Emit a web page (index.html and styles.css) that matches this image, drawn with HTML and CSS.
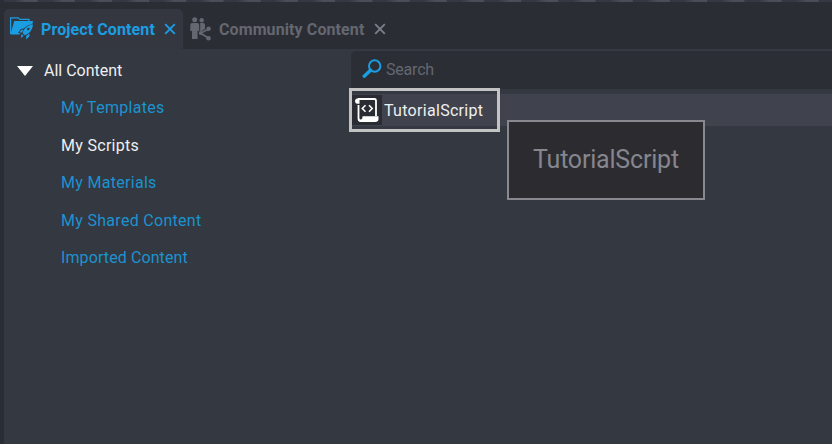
FILE: index.html
```html
<!DOCTYPE html>
<html lang="en">
<head>
<meta charset="utf-8">
<title>Project Content</title>
<link rel="stylesheet" href="styles.css">
</head>
<body>
<div class="window">
  <div class="top-edge"></div>
  <nav class="tabs">
    <div class="tab tab-active">
      <svg class="folder-icon" viewBox="0 0 24 24">
        <path d="M.6 17V.8h7.600l1.800 1.600h9v1.800" fill="none" stroke="currentColor" stroke-width="1.200"/>
        <path d="M.4 17.500L4.200 4h18.800l-.6 3.200c-3.500.2-6.400 1.800-8.400 4.300l-3.200.6-2.800 4 2.500.2-1 1.200z" fill="currentColor"/>
        <path d="M23 7.500c-4 .2-7.500 2.200-9.500 6l-1 2.500 2.300 2.200c4.500-1.700 7.500-4.700 8.200-10.700z" fill="currentColor"/>
        <path d="M9.300 15.200l2.200-2.500h2l-1.500 2.700zM16 19l3.500-2.600v2.800L16.300 22.500zM11.500 17l2.200 1.800-2.900 2.400z" fill="currentColor"/>
        <circle cx="18.300" cy="12" r="1.300" fill="#343740"/>
      </svg>
      <span class="tab-label">Project Content</span>
      <svg class="close-icon" viewBox="0 0 12 12"><path d="M1.2 1.2l9.6 9.6M10.8 1.2l-9.6 9.6"/></svg>
    </div>
    <div class="tab tab-idle">
      <svg class="people-icon" viewBox="0 0 22 24">
        <g fill="currentColor">
          <circle cx="4.700" cy="2.800" r="2.500"/>
          <path d="M2 6h5.500q1.700 0 1.700 2v6H7.500v8H2v-8H.3V8q0-2 1.700-2z"/>
          <circle cx="11.700" cy="3.200" r="2.200"/>
          <path d="M10.200 6H13q2 0 2 2v4l-4 2.500h-.8z"/>
          <circle cx="18.600" cy="11.700" r="2.200"/><circle cx="10.700" cy="16" r="1.900"/><circle cx="18.500" cy="21.300" r="2.300"/>
        </g>
        <path d="M18.500 12l-8 4.300 8 4.800" fill="none" stroke="currentColor" stroke-width="1.800"/>
      </svg>
      <span class="tab-label">Community Content</span>
      <svg class="close-icon" viewBox="0 0 12 12"><path d="M1.2 1.2l9.6 9.6M10.8 1.2l-9.6 9.6"/></svg>
    </div>
  </nav>
  <main class="panel">
    <aside class="tree">
      <div class="tree-root"><svg class="arrow" viewBox="0 0 16 10"><path d="M0 0h16L8 10z"/></svg><span>All Content</span></div>
      <ul class="tree-list">
        <li>My Templates</li>
        <li class="selected">My Scripts</li>
        <li>My Materials</li>
        <li>My Shared Content</li>
        <li class="imported">Imported Content</li>
      </ul>
    </aside>
    <section class="content">
      <div class="search">
        <svg class="search-icon" viewBox="0 0 20 20"><circle cx="12.700" cy="7" r="5.700" fill="none" stroke="currentColor" stroke-width="2"/><path d="M8.500 11.200l-6.300 6" stroke="currentColor" stroke-width="3.400" stroke-linecap="round"/></svg>
        <span>Search</span>
      </div>
      <div class="script-row">
        <span class="icon-cell">
          <svg class="script-icon" viewBox="0 0 24 24">
            <path d="M3.500 20V7M3 1h16.500q1.500 0 1.500 2v15" fill="none" stroke="#fff" stroke-width="1.800"/>
            <path d="M3.500.2h1v5.600H2Q0 5.500 0 3T3.500.2z" fill="#fff"/>
            <path d="M7.500 18.200H23.500V21q0 3-3.500 3H5.500q-3 0-2.900-4h1.800q0 1.500 1.400 1.500 1.700 0 1.700-3.300z" fill="#fff"/>
            <path d="M10.500 7.300L7.300 10.500l3.200 3.200M14 7.300l3.200 3.200-3.200 3.200" fill="none" stroke="#fff" stroke-width="1.600"/>
          </svg>
        </span>
        <span class="script-name">TutorialScript</span>
        <div class="highlight"></div>
        <div class="tooltip">TutorialScript</div>
      </div>
    </section>
  </main>
</div>
</body>
</html>
```
FILE: styles.css
```css
* { box-sizing: border-box; }
body {
  margin: 0;
  background: #2b2d35;
  font-family: Roboto, "Liberation Sans", sans-serif;
  font-size: 16px;
  overflow: hidden;
}
svg { display: block; flex: none; }
.window { width: 832px; height: 444px; display: flex; flex-direction: column; }
.top-edge {
  height: 2px;
  margin-left: 4px;
  background: repeating-linear-gradient(90deg, #353842 0 10px, #4b4e58 22px 33px, #353842 34px 37.200px);
}
.tabs { height: 47px; padding: 7px 0 0 4px; display: flex; }
.tab { height: 40px; display: flex; align-items: center; font-weight: 700; white-space: nowrap; }
.tab-active { width: 179px; padding-left: 6px; background: #343740; border-radius: 5px 5px 0 0; color: #1b9de2; }
.tab-idle { padding-left: 7px; color: #646770; }
.tab-label { line-height: 20px; padding-top: 2px; letter-spacing: .1px; }
.folder-icon { width: 24px; height: 24px; margin-right: 7px; }
.people-icon { width: 22px; height: 24px; margin-right: 7px; }
.tab-active .tab-label { width: 122.500px; }
.tab-idle .tab-label { width: 154.500px; }
.close-icon { width: 12px; height: 12px; }
.close-icon path { stroke: currentColor; stroke-width: 1.900; fill: none; }
.tab-idle .close-icon { color: #7c7f88; }
.panel { flex: 1; margin-left: 4px; background: #343840; display: flex; }
.tree { width: 347px; padding-top: 3px; }
.tree-root { height: 37px; padding-left: 13px; display: flex; align-items: center; gap: 11px; color: #eeeff0; }
.arrow { width: 16px; height: 10px; fill: #fff; }
.tree-list { list-style: none; margin: 0; padding: 0 0 0 57px; color: #1b93d0; letter-spacing: .3px; }
.tree-list li { height: 37.500px; line-height: 37.500px; }
.tree-list .selected { color: #eeeff0; }
.tree-list .imported { letter-spacing: .1px; }
.content { flex: 1; padding-top: 2px; }
.search { height: 38px; padding: 0 0 2px 11px; display: flex; align-items: center; gap: 4px; background: #2b2e35; border-radius: 5px 0 0 0; color: #646770; letter-spacing: -.2px; }
.search-icon { width: 20px; height: 20px; color: #1b9de2; }
.script-row { position: relative; height: 32px; margin-top: 5px; display: flex; align-items: center; background: #40434d; color: #eeeff0; }
.icon-cell { width: 31px; height: 30px; padding: 3px 0 0 4px; background: #292c33; }
.script-icon { width: 24px; height: 24px; }
.script-name { margin-left: 2px; letter-spacing: .3px; }
.highlight { position: absolute; left: -2px; top: -6px; width: 151px; height: 44px; border: 3px solid #c3c3c4; }
.tooltip { position: absolute; left: 156px; top: 26px; width: 198px; height: 80px; padding-left: 24px; border: 2px solid #888990; background: #2c2c30; color: #85868e; font-size: 25px; letter-spacing: -.2px; line-height: 75px; }
```
